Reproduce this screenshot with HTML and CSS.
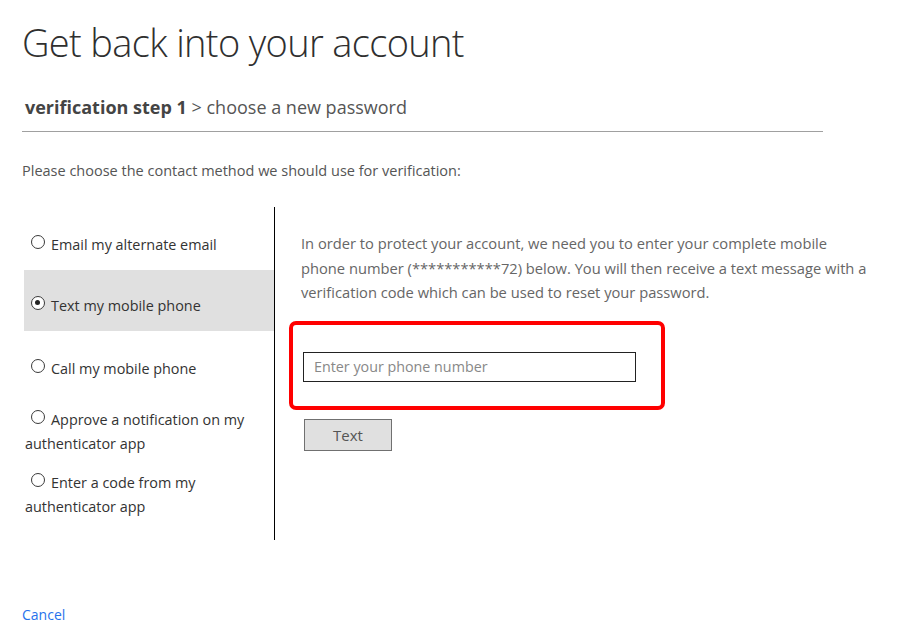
FILE: index.html
```html
<!DOCTYPE html>
<html lang="en">
<head>
<meta charset="utf-8">
<title>Get back into your account</title>
<link rel="stylesheet" href="styles.css">
</head>
<body>
<main class="page">
  <h1 class="title">Get back into your account</h1>
  <div class="steps"><span class="steps-current">verification step 1</span> &gt; choose a new password</div>
  <p class="prompt">Please choose the contact method we should use for verification:</p>

  <div class="panel">
    <ul class="methods">
      <li class="method first"><span class="radio"></span>Email my alternate email</li>
      <li class="method selected"><span class="radio checked"></span>Text my mobile phone</li>
      <li class="method"><span class="radio"></span>Call my mobile phone</li>
      <li class="method wrap"><span class="radio"></span>Approve a notification on my authenticator app</li>
      <li class="method wrap"><span class="radio"></span>Enter a code from my authenticator app</li>
    </ul>
    <div class="detail">
      <p class="info">In order to protect your account, we need you to enter your complete mobile phone number (***********72) below. You will then receive a text message with a verification code which can be used to reset your password.</p>
      <div class="highlight">
        <input class="phone" type="text" placeholder="Enter your phone number">
      </div>
      <button class="send" type="button">Text</button>
    </div>
  </div>

  <a class="cancel" href="#">Cancel</a>
</main>
</body>
</html>
```
FILE: styles.css
```css
* { box-sizing: border-box; }

html, body {
  margin: 0;
  padding: 0;
  background: #fff;
}

body {
  font-family: "Open Sans", "Noto Sans", sans-serif;
  color: #333;
}

.page {
  padding: 16px 0 0 22px;
  width: 904px;
}

.title {
  margin: 0;
  font-weight: 300;
  font-size: 38px;
  line-height: 52px;
  color: #2f2f2f;
  letter-spacing: -0.65px;
}

.steps {
  margin-top: 27px;
  width: 801px;
  padding: 0 0 12px 3px;
  font-size: 18px;
  line-height: 24px;
  color: #555;
  border-bottom: 1px solid #a0a0a0;
}

.steps-current {
  font-weight: 700;
  color: #444;
}

.prompt {
  margin: 29px 0 0 0;
  font-size: 14.5px;
  line-height: 20px;
  color: #555;
}

.panel {
  margin-top: 26px;
  display: flex;
  height: 333px;
}

.methods {
  list-style: none;
  margin: 0;
  padding: 0 0 0 2px;
  width: 253px;
  border-right: 1px solid #000;
}

.method {
  padding: 26px 0 0 1px;
  height: 62px;
  font-size: 14.4px;
  line-height: 24px;
  color: #333;
}

.method.first {
  height: 63px;
}

.method.selected {
  background: #e0e0e0;
  padding-top: 24px;
  height: 61px;
}

.method.wrap {
  height: auto;
  padding: 15px 8px 0 1px;
}

.radio {
  display: inline-block;
  width: 14px;
  height: 14px;
  margin: 0 6px 0 6px;
  border: 1.5px solid #3a3a3a;
  border-radius: 50%;
  vertical-align: 1px;
  position: relative;
  background: #fff;
}

.radio.checked::after {
  content: "";
  position: absolute;
  left: 3px;
  top: 3px;
  width: 5px;
  height: 5px;
  border-radius: 50%;
  background: #222;
}

.detail {
  flex: 1;
  padding: 24px 0 0 14px;
}

.info {
  margin: 0 0 0 12px;
  width: 570px;
  font-size: 14.7px;
  line-height: 24.5px;
  color: #666;
}

.highlight {
  margin-top: 16px;
  width: 376px;
  padding: 27px 0 24px 10px;
  border: 4px solid #f00;
  border-radius: 7px;
}

.phone {
  display: block;
  width: 333px;
  height: 30px;
  margin: 0;
  padding: 0 10px;
  border: 1px solid #222;
  border-radius: 0;
  font-family: inherit;
  font-size: 14.3px;
  color: #333;
  outline: none;
}

.phone::placeholder {
  color: #888;
}

.send {
  display: block;
  margin: 9px 0 0 15px;
  width: 88px;
  height: 32px;
  padding: 0;
  background: #e0e0e0;
  border: 1px solid #707070;
  font-family: inherit;
  font-size: 15px;
  color: #555;
}

.cancel {
  display: inline-block;
  margin-top: 65px;
  font-size: 14px;
  line-height: 20px;
  color: #2672ec;
  text-decoration: none;
}
```
